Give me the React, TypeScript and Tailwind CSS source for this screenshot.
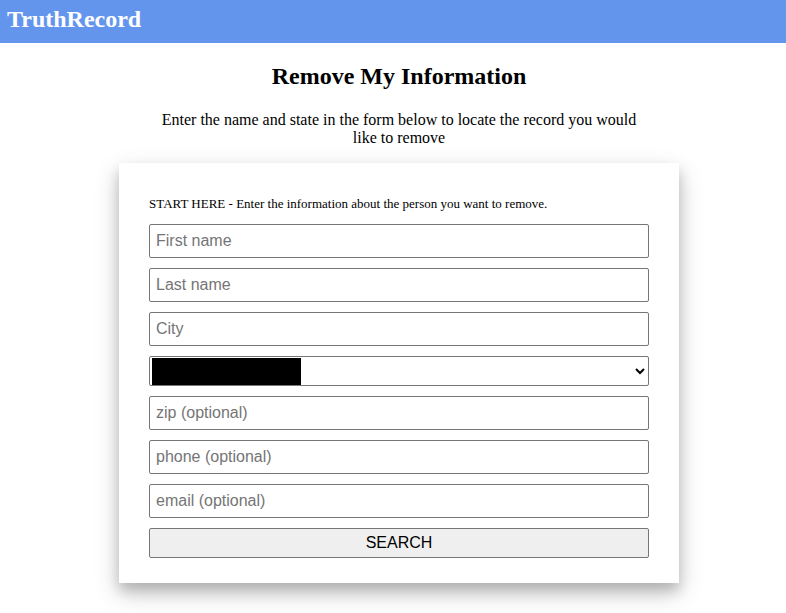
import React from "react";

export default function App() {
  const inputCls =
    "block w-full h-[34px] border border-[#767676] rounded-[2px] px-[6px] text-[16px] text-black placeholder:text-[#757575] bg-white outline-none";
  const font = { fontFamily: '"Liberation Sans", Arial, sans-serif' };
  return (
    <div className="min-h-[613px] bg-white" style={{ fontFamily: '"Liberation Serif", "Times New Roman", serif' }}>
      <div className="h-[43px] bg-[#6495ed] pl-[7px] pt-[5px]">
        <span className="text-white font-bold text-[24px] leading-[28px]">TruthRecord</span>
      </div>
      <div className="pl-[12px]">
        <h2 className="text-center font-bold text-[24px] leading-[27px] mt-[20px] text-black">Remove My Information</h2>
        <p className="text-center text-[16px] leading-[18px] max-w-[480px] mx-auto mt-[21px] text-black">
          Enter the name and state in the form below to locate the record you would like to remove
        </p>
        <div className="w-[560px] mx-auto mt-[16px] bg-white px-[30px] pt-[33px] pb-[25px] shadow-[0_8px_12px_0_rgba(0,0,0,0.18),0_10px_24px_0_rgba(0,0,0,0.19)]">
          <p className="text-[13px] leading-[15px] text-black">
            START HERE - Enter the information about the person you want to remove.
          </p>
          <div className="mt-[13px] flex flex-col gap-[10px]" style={font}>
            <input className={inputCls} placeholder="First name" />
            <input className={inputCls} placeholder="Last name" />
            <input className={inputCls} placeholder="City" />
            <div className="relative">
              <select className="block w-full h-[30px] border border-[#767676] rounded-[2px] bg-white text-[16px] text-black outline-none">
                <option></option>
              </select>
              <div className="absolute left-[3px] top-[2px] w-[149px] h-[27px] bg-black pointer-events-none" />
            </div>
            <input className={inputCls} placeholder="zip (optional)" />
            <input className={inputCls} placeholder="phone (optional)" />
            <input className={inputCls} placeholder="email (optional)" />
            <button className="block w-full h-[30px] border border-[#767676] rounded-[2px] bg-[#efefef] text-[16px] text-black">
              SEARCH
            </button>
          </div>
        </div>
      </div>
    </div>
  );
}
